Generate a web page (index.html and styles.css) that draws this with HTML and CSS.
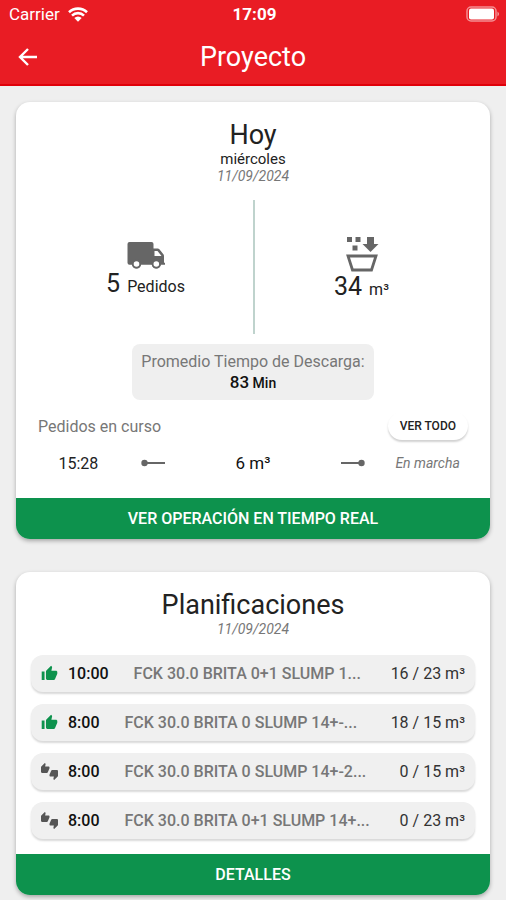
FILE: index.html
```html
<!DOCTYPE html>
<html lang="es">
<head>
<meta charset="utf-8">
<meta name="viewport" content="width=device-width, initial-scale=1">
<title>Proyecto</title>
<link rel="stylesheet" href="styles.css">
</head>
<body>
<svg class="defs" aria-hidden="true">
  <symbol id="thumb" viewBox="0 0 24 24"><path d="M1 21h4V9H1v12zm22-11c0-1.100-.9-2-2-2h-6.310l.95-4.570.03-.32c0-.41-.17-.79-.44-1.060L14.170 1 7.590 7.590C7.220 7.950 7 8.450 7 9v10c0 1.100.9 2 2 2h9c.83 0 1.540-.5 1.840-1.220l3.020-7.050c.09-.23.14-.47.14-.73v-2z"/></symbol>
  <symbol id="thumbs" viewBox="0 0 24 24"><path d="M12 6c0-.55-.45-1-1-1H5.820l.66-3.180.02-.23c0-.31-.13-.59-.33-.8L5.380 0 .44 4.940C.17 5.210 0 5.590 0 6v6.500c0 .83.67 1.500 1.500 1.500h6.750c.62 0 1.150-.38 1.380-.91l2.260-5.290c.07-.17.11-.36.11-.55V6zm10.500 4h-6.750c-.62 0-1.150.38-1.380.91l-2.260 5.290c-.07.17-.11.36-.11.55V18c0 .55.45 1 1 1h5.180l-.66 3.180-.02.24c0 .31.13.59.33.8l.79.78 4.940-4.940c.27-.27.44-.65.44-1.060v-6.500c0-.83-.67-1.500-1.500-1.500z"/></symbol>
</svg>

<header class="header">
  <div class="status">
    <div class="carrier">
      <span>Carrier</span>
      <svg class="wifi" viewBox="0 0 20 15" aria-hidden="true">
        <path d="M1 5.200a13 13 0 0 1 18 0M4 8.600a8.600 8.600 0 0 1 12 0" fill="none" stroke="#fff" stroke-width="2.600"/>
        <path d="M10 14.800 6.300 11a5.300 5.300 0 0 1 7.400 0z" fill="#fff"/>
      </svg>
    </div>
    <time class="clock">17:09</time>
    <svg class="battery" viewBox="0 0 34 16" aria-hidden="true">
      <rect x="1" y="1" width="29" height="14" rx="4" fill="none" stroke="#fff" stroke-opacity=".5" stroke-width="1.500"/>
      <rect x="3" y="2.500" width="25" height="11" rx="2" fill="#fff"/>
      <path d="M31.500 5.500q3 2.500 0 5z" fill="#fff" fill-opacity=".6"/>
    </svg>
  </div>
  <div class="navbar">
    <button class="back" type="button" aria-label="Volver">
      <svg viewBox="0 0 20 20" aria-hidden="true"><path d="M19 10H2.500M10 2 2 10l8 8" fill="none" stroke="#fff" stroke-width="2.400"/></svg>
    </button>
    <h1 class="title">Proyecto</h1>
  </div>
</header>

<main class="content">
  <section class="card">
    <div class="card-head">
      <h2>Hoy</h2>
      <p class="weekday">miércoles</p>
      <time class="date">11/09/2024</time>
    </div>

    <div class="stats">
      <div class="stat">
        <svg class="truck" viewBox="0 0 38 28" aria-hidden="true">
          <path fill="#666" fill-rule="evenodd" d="M2.500 1h22a2 2 0 0 1 2 2v4.500h4.200q1 0 1.700.8l4 5q.6.800.6 1.700v6.800h1v2h-4.200a4.600 4.600 0 0 1-9 0H14a4.600 4.600 0 0 1-9 0H2.500a2 2 0 0 1-2-2V3a2 2 0 0 1 2-2zM27.500 10v5h7l-4-5z"/>
          <circle cx="9.500" cy="23" r="3.700" fill="#fff" stroke="#666" stroke-width="1.800"/>
          <circle cx="29.300" cy="23" r="3.700" fill="#fff" stroke="#666" stroke-width="1.800"/>
        </svg>
        <p class="figure"><span class="number">5</span> <span>Pedidos</span></p>
      </div>
      <div class="stat volume">
        <svg class="bucket" viewBox="0 0 34 36" aria-hidden="true">
          <path fill="#666" d="M2 1h5v5H2zM10.500 1h5v5h-5zM7.500 9.500h5v5h-5zM22 1h7v7h4.500l-8 8-8-8H22z"/>
          <path fill="none" stroke="#666" stroke-width="2.800" d="M3 20h28l-4.500 14h-19z"/>
        </svg>
        <p class="figure"><span class="number">34</span> <span>m³</span></p>
      </div>
    </div>

    <div class="average">
      <p class="average-label">Promedio Tiempo de Descarga:</p>
      <p class="average-value"><span>83</span> Min</p>
    </div>

    <div class="orders-head">
      <h3>Pedidos en curso</h3>
      <button class="see-all" type="button">VER TODO</button>
    </div>
    <div class="order">
      <time>15:28</time>
      <svg class="line" viewBox="0 0 24 8" aria-hidden="true"><circle cx="3.500" cy="4" r="3.200"/><path d="M3 3h21v2H3z"/></svg>
      <span class="order-volume">6 m³</span>
      <svg class="line" viewBox="0 0 24 8" aria-hidden="true"><circle cx="20.500" cy="4" r="3.200"/><path d="M0 3h21v2H0z"/></svg>
      <em>En marcha</em>
    </div>
    <button class="action" type="button">VER OPERACIÓN EN TIEMPO REAL</button>
  </section>

  <section class="card">
    <div class="card-head plans-head">
      <h2>Planificaciones</h2>
      <time class="date">11/09/2024</time>
    </div>
    <ul class="plans">
      <li class="plan">
        <svg class="ok" aria-hidden="true"><use href="#thumb"/></svg>
        <time>10:00</time><span class="mix">FCK 30.0 BRITA 0+1 SLUMP 1...</span><span>16 / 23 m³</span>
      </li>
      <li class="plan">
        <svg class="ok" aria-hidden="true"><use href="#thumb"/></svg>
        <time>8:00</time><span class="mix">FCK 30.0 BRITA 0 SLUMP 14+-...</span><span>18 / 15 m³</span>
      </li>
      <li class="plan">
        <svg class="pending" aria-hidden="true"><use href="#thumbs"/></svg>
        <time>8:00</time><span class="mix">FCK 30.0 BRITA 0 SLUMP 14+-2...</span><span>0 / 15 m³</span>
      </li>
      <li class="plan">
        <svg class="pending" aria-hidden="true"><use href="#thumbs"/></svg>
        <time>8:00</time><span class="mix">FCK 30.0 BRITA 0+1 SLUMP 14+...</span><span>0 / 23 m³</span>
      </li>
    </ul>
    <button class="action" type="button">DETALLES</button>
  </section>
</main>
</body>
</html>
```
FILE: styles.css
```css
* {
  box-sizing: border-box;
}

body {
  margin: 0;
  background: #efefef;
  color: #222;
  font-family: Roboto, "Liberation Sans", sans-serif;
  font-size: 16px;
}

h1, h2, h3, p, ul {
  margin: 0;
  padding: 0;
  font-weight: 400;
}

button {
  border: 0;
  padding: 0;
  font-family: inherit;
  cursor: pointer;
}

svg {
  display: block;
  flex: none;
}

.defs {
  display: none;
}

.header {
  background: #e91c24;
  border-bottom: 2px solid #e0000a;
  color: #fff;
}

.status {
  display: grid;
  grid-template-columns: 1fr auto 1fr;
  align-items: center;
  height: 28px;
  padding: 0 6px 0 9px;
}

.carrier {
  display: flex;
  align-items: center;
  gap: 8px;
  font-size: 17px;
}

.wifi {
  width: 20px;
  height: 15px;
}

.clock {
  font-size: 17px;
  font-weight: 700;
}

.battery {
  justify-self: end;
  width: 34px;
  height: 16px;
}

.navbar {
  display: grid;
  grid-template-columns: 40px 1fr 40px;
  align-items: center;
  height: 56px;
  padding: 2px 8px 0;
}

.back {
  display: grid;
  place-items: center;
  height: 40px;
  background: none;
}

.back svg {
  width: 20px;
  height: 20px;
}

.title {
  text-align: center;
  font-size: 27px;
}

.content {
  display: grid;
  gap: 33px;
  padding: 16px 16px 5px;
}

.card {
  overflow: hidden;
  border-radius: 14px;
  background: #fff;
  box-shadow: 0 2px 4px #0000004d;
}

.card-head {
  padding-top: 17px;
  text-align: center;
}

.card-head h2 {
  font-size: 27px;
  line-height: 32px;
}

.weekday {
  font-size: 15px;
  line-height: 17px;
}

.date {
  display: block;
  color: #777;
  font-size: 14px;
  font-style: italic;
  line-height: 16px;
}

.stats {
  display: grid;
  grid-template-columns: 1fr 1fr;
  margin-top: 16px;
}

.stat {
  display: flex;
  flex-direction: column;
  align-items: center;
  justify-content: center;
  height: 134px;
  padding: 5px 0 0 22px;
}

.volume {
  border-left: 2px solid #bfd3cd;
  padding: 2px 22px 0 0;
}

.figure {
  display: flex;
  align-items: baseline;
  gap: 7px;
}

.number {
  font-size: 25px;
}

.truck {
  width: 38px;
  height: 28px;
}

.bucket {
  width: 34px;
  height: 36px;
}

.average {
  width: fit-content;
  margin: 10px auto 0;
  padding: 8px 9px 7px;
  border-radius: 8px;
  background: #efefef;
  text-align: center;
}

.average-label {
  color: #777;
  line-height: 20px;
}

.average-value {
  color: #111;
  font-size: 14px;
  font-weight: 500;
  line-height: 20px;
}

.average-value span {
  font-size: 17px;
}

.orders-head {
  display: flex;
  align-items: center;
  justify-content: space-between;
  margin-top: 12px;
  padding: 0 22px;
}

.orders-head h3 {
  color: #777;
  font-size: 16px;
}

.see-all {
  height: 28px;
  padding: 0 12px;
  border-radius: 14px;
  background: #fff;
  box-shadow: 0 2px 2px #0000002e;
  color: #222;
  font-size: 12px;
  font-weight: 500;
}

.order {
  display: grid;
  grid-template-columns: 3fr 3fr 5fr 3fr 3fr;
  align-items: center;
  justify-items: center;
  height: 46px;
  margin-bottom: 12px;
  padding: 0 25px;
}

.order-volume {
  color: #111;
  font-size: 17px;
}

.order em {
  color: #777;
  font-size: 14px;
}

.line {
  width: 24px;
  height: 8px;
  fill: #666;
}

.action {
  display: block;
  width: 100%;
  height: 41px;
  background: #0d924d;
  color: #fff;
  font-size: 16px;
  font-weight: 500;
}

.plans {
  display: grid;
  gap: 12px;
  padding: 18px 15px 15px;
  list-style: none;
}

.plan {
  display: flex;
  align-items: center;
  height: 37px;
  padding: 0 10px;
  border-radius: 12px;
  background: #f0f0f0;
  box-shadow: 0 2px 2px #00000026;
  color: #333;
}

.plan time {
  margin-left: 10px;
  color: #111;
  font-weight: 500;
}

.plan svg {
  width: 17px;
  height: 17px;
}

.ok {
  fill: #0d924d;
}

.pending {
  fill: #555;
}

.mix {
  flex: 1;
  min-width: 0;
  padding-left: 25px;
  overflow: hidden;
  color: #777;
  font-weight: 500;
  text-overflow: ellipsis;
  white-space: nowrap;
}
```
